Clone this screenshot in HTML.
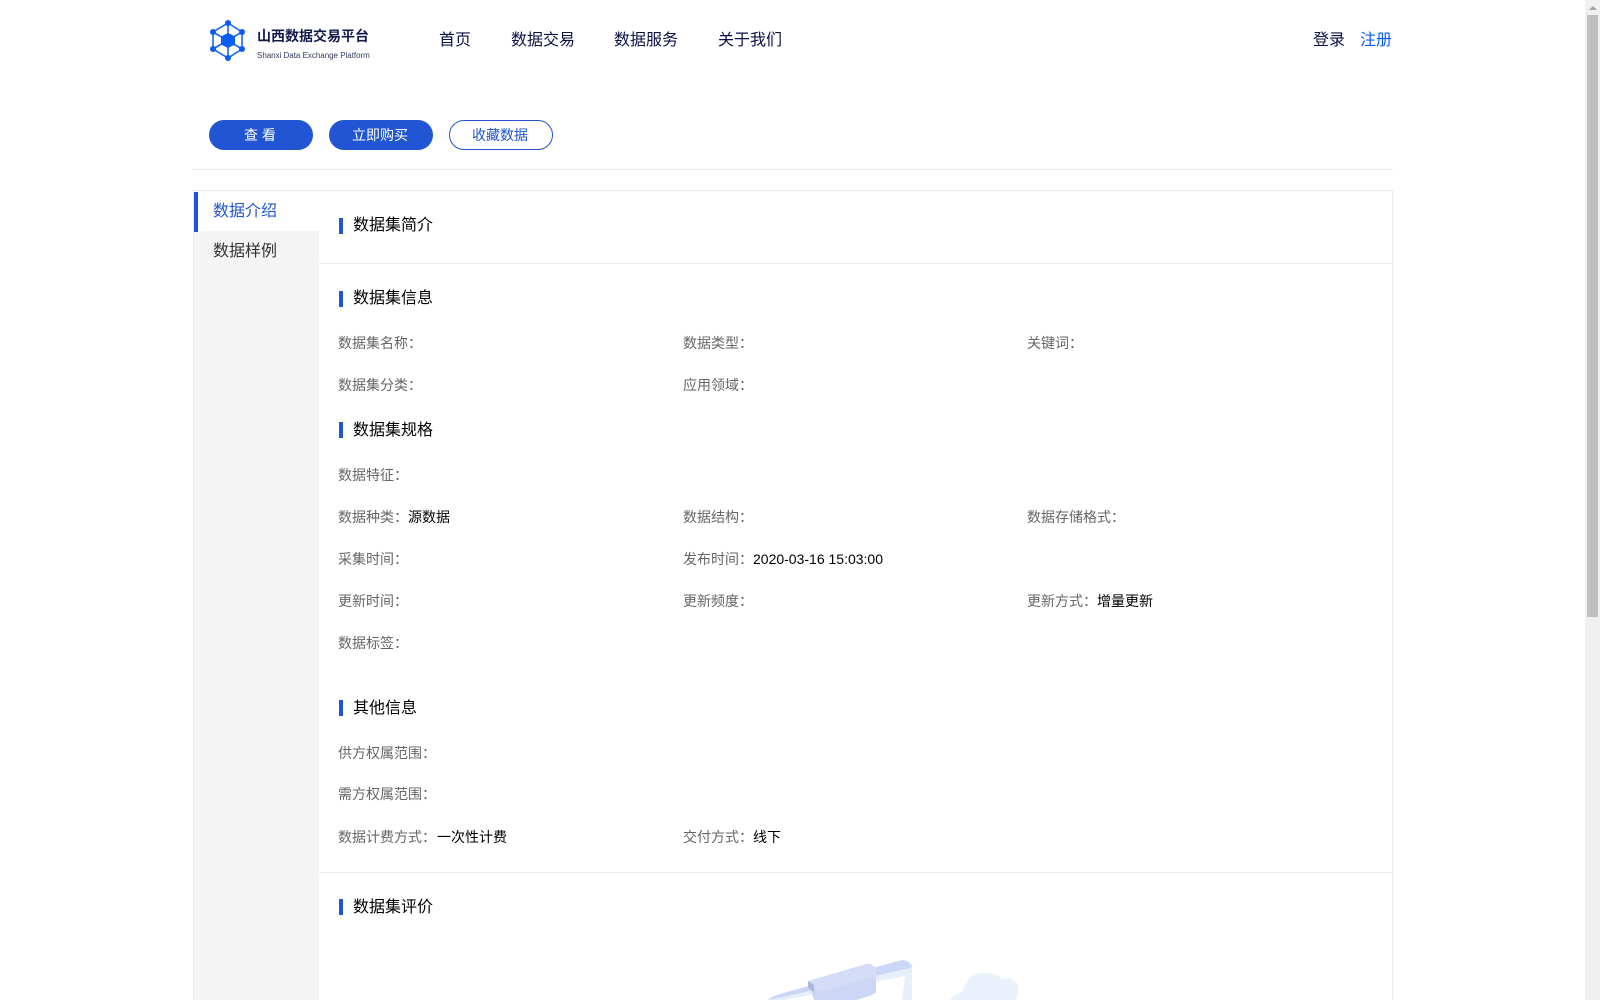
<!DOCTYPE html>
<html lang="zh-CN">
<head>
<meta charset="utf-8">
<title>山西数据交易平台</title>
<style>
html,body{margin:0;padding:0;background:#fff}
#p{position:relative;width:1600px;height:1000px;overflow:hidden;background:#fff}
body{font-family:"Liberation Sans","Noto Sans CJK SC",sans-serif;font-size:14px;color:#000}
.a{position:absolute;white-space:nowrap}
.nav{font-size:16px;line-height:20px;top:31px;color:#0b1146}
.btn{top:120px;width:104px;height:30px;border-radius:15px;background:#2155d3;color:#fff;text-align:center;line-height:30px;font-size:14px;box-sizing:border-box;padding-right:2px}
.bar{left:339px;width:4px;height:16px;background:#2155d3}
.h{left:353px;font-size:16px;line-height:20px;color:#000}
.l{font-size:14px;line-height:20px;color:#666}
.l b{font-weight:normal;color:#000}
.c1{left:338px}.c2{left:683px}.c3{left:1027px}
.hr{height:1px;background:#ebebeb}
</style>
</head>
<body>
<div id="p">
<svg class="a" style="left:208px;top:19px" width="40" height="44" viewBox="0 0 40 44">
<g stroke="#1a66f5" stroke-width="1.6" fill="none">
<path d="M20 4 34 13V30L20 39 5 30V13Z"/>
<path d="M20 4V39M5 13 34 30M34 13 5 30"/>
</g>
<path d="M20 14 27 17.5V25.5L20 29 13 25.5V17.5Z" fill="#0a5cf5"/>
<g fill="#0a5cf5"><circle cx="20" cy="4" r="3"/><circle cx="34" cy="13" r="3"/><circle cx="34" cy="30" r="3"/><circle cx="20" cy="39" r="3"/><circle cx="5" cy="30" r="3"/><circle cx="5" cy="13" r="3"/></g>
</svg>
<div class="a" style="left:257px;top:25px;font-size:14px;line-height:22px;font-weight:bold;color:#14194d;font-family:'Noto Sans CJK SC',sans-serif">山西数据交易平台</div>
<div class="a" style="left:257px;top:49px;font-size:8px;line-height:14px;color:#333a5c;letter-spacing:-.02px">Shanxi Data Exchange Platform</div>

<div class="a nav" style="left:439px">首页</div>
<div class="a nav" style="left:511px">数据交易</div>
<div class="a nav" style="left:614px">数据服务</div>
<div class="a nav" style="left:718px">关于我们</div>
<div class="a nav" style="left:1313px">登录</div>
<div class="a nav" style="left:1360px;color:#0d5cf0">注册</div>

<div class="a btn" style="left:209px">查 看</div>
<div class="a btn" style="left:329px">立即购买</div>
<div class="a btn" style="left:449px;background:#fff;color:#2155d3;border:1px solid #2155d3;line-height:28px">收藏数据</div>

<div class="a hr" style="left:193px;top:169px;width:1200px"></div>

<div class="a" style="left:193px;top:190px;width:1200px;height:830px;box-sizing:border-box;border:1px solid #ebebeb"></div>
<div class="a" style="left:194px;top:231px;width:125px;height:769px;background:#f4f4f4"></div>
<div class="a" style="left:194px;top:192px;width:4px;height:40px;background:#2155d3"></div>
<div class="a" style="left:213px;top:202px;font-size:16px;line-height:20px;color:#2155d3">数据介绍</div>
<div class="a" style="left:213px;top:242px;font-size:16px;line-height:20px;color:#333">数据样例</div>

<div class="a bar" style="top:218px"></div><div class="a h" style="top:216px">数据集简介</div>
<div class="a hr" style="left:319px;top:263px;width:1073px"></div>

<div class="a bar" style="top:291px"></div><div class="a h" style="top:289px">数据集信息</div>
<div class="a l c1" style="top:333px">数据集名称：</div>
<div class="a l c2" style="top:333px">数据类型：</div>
<div class="a l c3" style="top:333px">关键词：</div>
<div class="a l c1" style="top:375px">数据集分类：</div>
<div class="a l c2" style="top:375px">应用领域：</div>

<div class="a bar" style="top:422px"></div><div class="a h" style="top:421px">数据集规格</div>
<div class="a l c1" style="top:465px">数据特征：</div>
<div class="a l c1" style="top:507px">数据种类：<b>源数据</b></div>
<div class="a l c2" style="top:507px">数据结构：</div>
<div class="a l c3" style="top:507px">数据存储格式：</div>
<div class="a l c1" style="top:549px">采集时间：</div>
<div class="a l c2" style="top:549px">发布时间：<b>2020-03-16 15:03:00</b></div>
<div class="a l c1" style="top:591px">更新时间：</div>
<div class="a l c2" style="top:591px">更新频度：</div>
<div class="a l c3" style="top:591px">更新方式：<b>增量更新</b></div>
<div class="a l c1" style="top:633px">数据标签：</div>

<div class="a bar" style="top:700px"></div><div class="a h" style="top:699px">其他信息</div>
<div class="a l c1" style="top:743px">供方权属范围：</div>
<div class="a l c1" style="top:784px">需方权属范围：</div>
<div class="a l c1" style="top:827px">数据计费方式：<b style="margin-left:1px">一次性计费</b></div>
<div class="a l c2" style="top:827px">交付方式：<b>线下</b></div>

<div class="a hr" style="left:319px;top:872px;width:1073px"></div>
<div class="a bar" style="top:899px"></div><div class="a h" style="top:898px">数据集评价</div>

<svg class="a" style="left:760px;top:950px" width="280" height="50" viewBox="0 0 280 50">
<path d="M8 50 Q12 46 20 44 L140 11 Q146 9 150 12 L152 14 L152 50 L142 50 L145 26 L24 50Z" fill="#e9eefd"/>
<path d="M8 50 Q12 46 20 44 L138 11 Q144 9 148 12 L153 17 L146 19 L23 47 Z" fill="#ccd7f7"/>
<path d="M50 38 L108 22 L116 27 L116 43 L110 46 L96 50 L54 50 Z" fill="#ccd7f6"/>
<path d="M48 31 L106 14 Q109 13 112 15 L116 18 L116 26 L60 42 L54 38Z" fill="#d4dcf8"/>
<path d="M48 31 L54 35 L54 42 L48 38Z" fill="#aab6de"/>
<path d="M190 50 Q194 45 202 42 Q207 24 222 23 Q234 22 242 29 Q252 26 257 33 Q260 40 256 50Z" fill="#ebf0fd"/>
</svg>

<div class="a" style="left:1585px;top:0;width:15px;height:1000px;background:#f0f0f0"></div>
<div class="a" style="left:1587px;top:15px;width:11px;height:602px;background:#bfbfbf"></div>
<div class="a" style="left:1589px;top:6px;width:0;height:0;border-left:4px solid transparent;border-right:4px solid transparent;border-bottom:4px solid #a3a3a3"></div>
</div>
</body>
</html>
